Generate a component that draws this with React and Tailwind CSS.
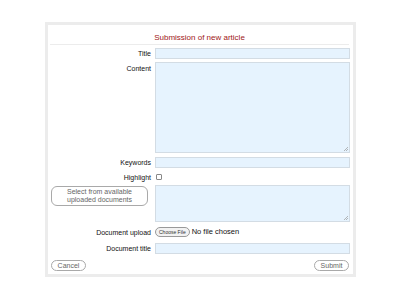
const inputCls = 'block w-full bg-[#e6f3fe] border border-[#d3dce4] outline-none';

const Label = ({ children, className = '' }) => (
  <div className={`text-right text-[7px] leading-[9px] text-[#111] ${className}`}>{children}</div>
);

const PillButton = ({ children, className = '' }) => (
  <button className={`rounded-full border border-[#a9a9a9] bg-white text-[7px] leading-[9px] text-[#666] ${className}`}>
    {children}
  </button>
);

export default function App() {
  return (
    <div className="w-[400px] h-[300px] bg-white pt-[22px]" style={{ fontFamily: '"Liberation Sans", Arial, sans-serif' }}>
      <div className="ml-[45px] w-[311px] h-[255px] border-[3px] border-[#ececec] pl-[1px] pr-[3px]">
        {/* Heading */}
        <div className="h-[20px] flex items-end justify-center pb-[1px] border-b border-[#ececec] mx-[1px]">
          <span className="text-[8px] leading-[10px] text-[#a01818]">Submission of new article</span>
        </div>

        <div className="grid grid-cols-[102px_195px] gap-x-[4px] mt-[3px]">
          {/* Title */}
          <Label className="pt-[1px]">Title</Label>
          <input className={`${inputCls} h-[11px]`} />

          {/* Content */}
          <Label className="pt-[2px] mt-[3px]">Content</Label>
          <div className={`${inputCls} h-[91px] mt-[3px] relative`}>
            <svg className="absolute right-[1px] bottom-[1px]" width="5" height="5" viewBox="0 0 5 5">
              <path d="M1 5L5 1M3 5L5 3" stroke="#999" strokeWidth="0.7" />
            </svg>
          </div>

          {/* Keywords */}
          <Label className="pt-[1px] mt-[4px]">Keywords</Label>
          <input className={`${inputCls} h-[11px] mt-[4px]`} />

          {/* Highlight */}
          <Label className="mt-[5px]">Highlight</Label>
          <div className="mt-[6px] flex">
            <span className="block w-[6px] h-[6px] ml-[1px] border border-[#888] rounded-[1px] bg-white"></span>
          </div>

          {/* Select documents */}
          <div className="mt-[3px] pl-[2px] pr-[2px]">
            <button className="w-[97px] h-[20px] rounded-[6px] border border-[#a9a9a9] bg-white text-[7px] leading-[8px] text-[#666]">
              Select from available
              <br />
              uploaded documents
            </button>
          </div>
          <div className={`${inputCls} h-[37px] mt-[3px] relative`}>
            <svg className="absolute right-[1px] bottom-[1px]" width="5" height="5" viewBox="0 0 5 5">
              <path d="M1 5L5 1M3 5L5 3" stroke="#999" strokeWidth="0.7" />
            </svg>
          </div>

          {/* Document upload */}
          <Label className="mt-[5px] pt-[1px]">Document upload</Label>
          <div className="mt-[4px] flex items-center h-[11px]">
            <button className="h-[10px] px-[3px] rounded-full border border-[#999] bg-[#f2f2f2] text-[5px] leading-[8px] text-[#333]">
              Choose File
            </button>
            <span className="ml-[2px] text-[7.5px] leading-[9px] text-[#111]">No file chosen</span>
          </div>

          {/* Document title */}
          <Label className="mt-[6px] pt-[1px]">Document title</Label>
          <input className={`${inputCls} h-[11px] mt-[6px]`} />
        </div>

        {/* Actions */}
        <div className="flex justify-between mt-[6px] pl-[2px] pr-[1px]">
          <PillButton className="w-[35px] h-[11px]">Cancel</PillButton>
          <PillButton className="w-[35px] h-[11px]">Submit</PillButton>
        </div>
      </div>
    </div>
  );
}
